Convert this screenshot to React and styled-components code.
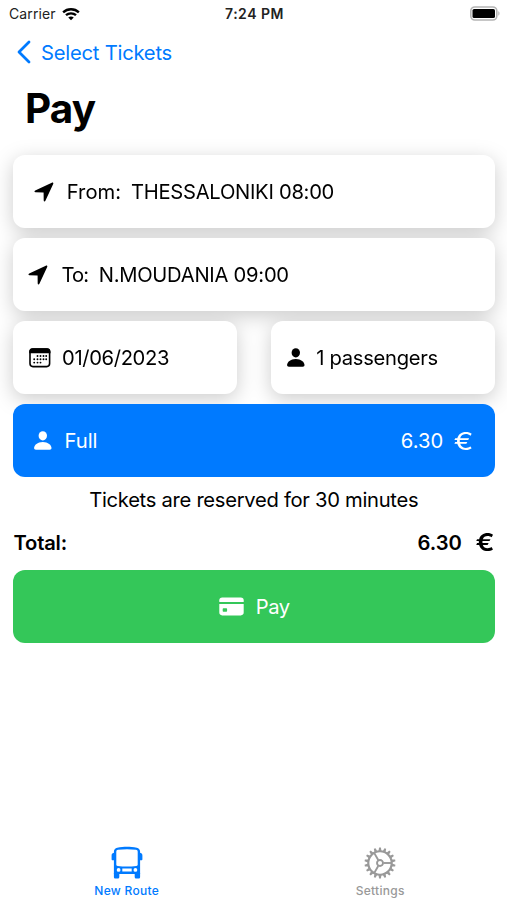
// Libraries
import React from 'react'
import styled, { createGlobalStyle, css } from 'styled-components'


// ============================================================================================================ Icons

const WifiIcon = () => (
    <svg width="18" height="14" viewBox="0 0 19 14" fill="none" stroke="#000" strokeWidth="2.5">
        <path d="M1.2 5.2C5.8 .9 13.2 .9 17.8 5.2" />
        <path d="M4.2 8.3c3-2.7 7.6-2.7 10.6 0" />
        <path d="M9.5 13.6L6.6 10.7c1.6-1.5 4.2-1.5 5.8 0z" fill="#000" stroke="none" />
    </svg>
)

const BatteryIcon = () => (
    <svg width="30" height="15" viewBox="0 0 30 15">
        <rect x="0.8" y="1" width="26" height="13" rx="4" fill="#fff" stroke="#b4b4b4" strokeWidth="1.6" />
        <rect x="2.5" y="3" width="22.5" height="9" rx="1.6" fill="#000" />
        <path d="M28.3 5.3c1.6.6 1.6 3.8 0 4.4z" fill="#b4b4b4" />
    </svg>
)

const ChevronIcon = () => (
    <svg width="14" height="24" viewBox="0 0 14 24" fill="none" stroke="currentColor" strokeWidth="2.8" strokeLinecap="round" strokeLinejoin="round">
        <path d="M12 2L2 12l10 10" />
    </svg>
)

const LocationIcon = () => (
    <svg width="20" height="20" viewBox="0 0 20 20" fill="currentColor">
        <path d="M1.2 8.5L17.8.7c1.1-.5 1.9.3 1.4 1.4l-7.8 16.7c-.5 1-1.7.8-1.7-.4l-.1-7.7c0-.2-.1-.3-.3-.3L1.5 10.3c-1.2 0-1.4-1.3-.3-1.8z" />
    </svg>
)

const PersonIcon = () => (
    <svg width="18" height="19" viewBox="0 0 18 19" fill="currentColor">
        <ellipse cx="8.8" cy="4.8" rx="4.2" ry="4.6" />
        <path d="M1.9 18.7c-1.2 0-1.8-.6-1.8-1.6 0-2.8 3.4-6 8.7-6s8.7 3.2 8.700 6c0 1-.6 1.600-1.800 1.600z" />
    </svg>
)

const CalendarIcon = () => (
    <svg width="22" height="20" viewBox="0 0 22 20">
        <rect x="1" y="1" width="19.6" height="17.6" rx="3" fill="none" stroke="#000" strokeWidth="1.6" />
        <path d="M.2 5.2V3.5C.2 1.4 1.5.2 3.5.2h14.6c2.1 0 3.4 1.2 3.4 3.3v1.7z" />
        {[
            [8.5, 8], [11.5, 8], [14.5, 8], [17.2, 8],
            [5.2, 11.3], [8.5, 11.3], [11.5, 11.3], [14.5, 11.3], [17.2, 11.3],
            [5.2, 14.6], [8.5, 14.6], [11.5, 14.6],
        ].map(([x, y]) => (
            <circle key={`${x}-${y}`} cx={x} cy={y} r="0.95" />
        ))}
    </svg>
)

const CardIcon = () => (
    <svg width="25" height="19" viewBox="0 0 25 19" fill="currentColor">
        <path d="M.3 5V3.2C.3 1.4 1.4.4 3.2.4h18.6c1.8 0 2.9 1 2.9 2.8V5z" />
        <path fillRule="evenodd" d="M.3 7h24.4v8.6c0 1.8-1.1 2.8-2.9 2.8H3.200c-1.800 0-2.900-1-2.900-2.800zM4.700 11.200c-.6 0-1 .4-1 1v1.500c0 .6.4 1 1 1h2.400c.6 0 1-.4 1-1v-1.500c0-.6-.4-1-1-1z" />
    </svg>
)

const BusIcon = () => (
    <svg width="32" height="33" viewBox="0 0 32 33" fill="currentColor">
        <path fillRule="evenodd" d="M6.200 1.700C9.500 1 13 .8 16 .8s6.500.2 9.800.9c2.100.5 3.300 1.900 3.300 4V28H2.900V5.700c0-2.100 1.200-3.500 3.300-4zM5.300 5.700v12.900c0 .8.4 1.200 1.300 1.300 6.200.8 12.600.8 18.800 0 .9-.1 1.300-.5 1.300-1.300V5.700c0-1.100-.6-1.700-1.700-1.900-6-.7-12-.7-18 0-1.100.2-1.700.8-1.700 1.900zM11.300 22.400v3.100h9.400v-3.100zM7.600 22a1.900 1.900 0 100 3.800 1.900 1.900 0 000-3.800zM24.400 22a1.900 1.900 0 100 3.800 1.900 1.900 0 000-3.800z" />
        <path d="M2.900 27h5.400v4c0 .9-.5 1.500-1.400 1.500H4.500c-1 0-1.600-.6-1.600-1.600zM29.100 27h-5.400v4c0 .9.5 1.500 1.400 1.500h2.400c1 0 1.600-.6 1.600-1.600z" />
        <path d="M3.500 6.800C1.600 6.800.6 7.700.6 9.400v3.800c0 .6.4 1 1 1h1.900zM28.500 6.800c1.900 0 2.900.9 2.900 2.600v3.800c0 .6-.4 1-1 1h-1.900z" />
    </svg>
)

const TEETH = Array.from({ length: 18 }, (_, i) => i * 20)

const GearIcon = () => (
    <svg width="32" height="32" viewBox="-16 -16 32 32" fill="none" stroke="currentColor" strokeWidth="1.9">
        <circle r="11.7" strokeWidth="2.1" />
        <circle r="3" />
        {TEETH.map((angle) => (
            <path key={angle} d="M12-1.5L15.5-.9V.9L12 1.5z" fill="currentColor" stroke="none" transform={`rotate(${angle + 10})`} />
        ))}
        {[0, 120, 240].map((angle) => (
            <path key={angle} d="M3.5 0H12" transform={`rotate(${angle})`} />
        ))}
    </svg>
)


// ============================================================================================================ Styles

const GlobalStyle = createGlobalStyle`
    * {
        box-sizing: border-box;
    }

    body {
        margin: 0;
        background: #fff;
        color: #000;
        font-family: Inter, "Liberation Sans", sans-serif;
    }

    svg {
        display: block;
        flex: none;
    }
`

const Screen = styled.div`
    display: flex;
    flex-direction: column;
    width: 507px;
    height: 900px;
    overflow: hidden;
`

const StatusBar = styled.div`
    display: grid;
    grid-template-columns: 1fr auto 1fr;
    align-items: center;
    height: 27px;
    padding: 0 7px 0 9px;
    font-size: 14px;
    color: #222;
`

const Carrier = styled.div`
    display: flex;
    align-items: center;
    gap: 6px;
    letter-spacing: 0.1px;
`

const Clock = styled.div`
    font-weight: 600;
    letter-spacing: 0.5px;
`

const Battery = styled.div`
    justify-self: end;
`

const NavBar = styled.div`
    display: flex;
    align-items: center;
    gap: 10px;
    height: 50px;
    padding-left: 17px;
    color: #007aff;
    font-size: 20.2px;
    letter-spacing: -0.22px;
`

const Title = styled.h1`
    margin: 0;
    padding: 5px 0 0 25px;
    height: 78px;
    font-size: 40.4px;
    line-height: 54px;
    font-weight: 700;
    letter-spacing: -0.8px;
`

const Content = styled.main`
    display: flex;
    flex-direction: column;
    flex: 1;
    padding: 0 12.5px 0 13px;
`

// One shadow for the whole group, so neighbouring panels never shade each other
const Trip = styled.section`
    display: flex;
    flex-direction: column;
    gap: 10px;
    filter: drop-shadow(0 5px 10px rgba(0, 0, 0, 0.2));
`

const Split = styled.div`
    display: grid;
    grid-template-columns: 1fr 1fr;
    gap: 34px;
`

const tones = {
    plain: css`
        background: #fff;
        color: #000;
    `,
    blue: css`
        background: #007aff;
        color: #fff;
    `,
    green: css`
        background: #34c759;
        color: #fff;
    `,
}

const Panel = styled.div`
    display: flex;
    align-items: center;
    height: 73px;
    padding: 0 ${({ $inset }) => $inset || 15}px;
    border: 0;
    border-radius: 12px;
    font-family: inherit;
    font-size: 20.2px;
    ${({ $tone }) => tones[$tone || 'plain']}
`

const Label = styled.span`
    margin-left: ${({ $gap }) => $gap || 12}px;
    letter-spacing: ${({ $track }) => $track || 0}px;
    white-space: pre;
`

// Stacked above the shadow that falls from the trip panels
const TicketPanel = styled(Panel)`
    position: relative;
    margin-top: 10px;
`

const Price = styled.span`
    display: flex;
    align-items: center;
    margin-left: auto;
    font-size: 20.2px;
    letter-spacing: 0;
`

const Euro = styled.span`
    margin-left: 14px;
    font-size: 24.5px;
    line-height: 24px;
    transform: scaleX(1.2);
    transform-origin: right;
`

const Notice = styled.p`
    margin: 10px 0 0;
    font-size: 20.2px;
    line-height: 26px;
    letter-spacing: -0.29px;
    text-align: center;
`

const Total = styled.div`
    display: flex;
    align-items: center;
    height: 26px;
    margin-top: 16px;
    padding: 0 0 0 0.5px;
    font-size: 20.2px;
    font-weight: 600;
    letter-spacing: -0.2px;

    ${Euro} {
        margin-left: 16px;
        transform: scaleX(1.15);
    }
`

const PayButton = styled(Panel)`
    justify-content: center;
    margin-top: 15px;
    padding-left: 16px;
`

const TabBar = styled.nav`
    display: grid;
    grid-template-columns: 1fr 1fr;
    height: 55px;
`

const Tab = styled.a`
    display: flex;
    flex-direction: column;
    align-items: center;
    justify-content: flex-end;
    gap: 4px;
    padding-bottom: 2px;
    font-size: 12px;
    line-height: 15px;
    font-weight: 500;
    letter-spacing: 0.3px;
    color: ${({ $active }) => ($active ? '#007aff' : '#999')};
`


// ============================================================================================================ Logic

const App = () => {
    return (
        <Screen>
            <GlobalStyle />
            <StatusBar>
                <Carrier>Carrier <WifiIcon /></Carrier>
                <Clock>7:24 PM</Clock>
                <Battery><BatteryIcon /></Battery>
            </StatusBar>
            <NavBar>
                <ChevronIcon />
                Select Tickets
            </NavBar>
            <Title>Pay</Title>
            <Content>
                <Trip>
                    <Panel $inset={21}>
                        <LocationIcon />
                        <Label $gap={12.8}>From:</Label>
                        <Label $gap={10} $track={-0.28}>THESSALONIKI 08:00</Label>
                    </Panel>
                    <Panel>
                        <LocationIcon />
                        <Label $gap={13.5} $track={-0.9}>To:</Label>
                        <Label $gap={10.5} $track={-0.26}>N.MOUDANIA 09:00</Label>
                    </Panel>
                    <Split>
                        <Panel $inset={15.5}>
                            <CalendarIcon />
                            <Label $gap={11.5} $track={-0.35}>01/06/2023</Label>
                        </Panel>
                        <Panel $inset={16}>
                            <PersonIcon />
                            <Label $gap={11.5} $track={-0.3}>1 passengers</Label>
                        </Panel>
                    </Split>
                </Trip>
                <TicketPanel $tone="blue" $inset={21}>
                    <PersonIcon />
                    <Label $gap={12.5}>Full</Label>
                    <Price>6.30<Euro>€</Euro></Price>
                </TicketPanel>
                <Notice>Tickets are reserved for 30 minutes</Notice>
                <Total>
                    Total:
                    <Price>6.30<Euro>€</Euro></Price>
                </Total>
                <PayButton as="button" $tone="green">
                    <CardIcon />
                    <Label $gap={12} $track={-0.4}>Pay</Label>
                </PayButton>
            </Content>
            <TabBar>
                <Tab $active><BusIcon />New Route</Tab>
                <Tab><GearIcon />Settings</Tab>
            </TabBar>
        </Screen>
    )
}

export default App
